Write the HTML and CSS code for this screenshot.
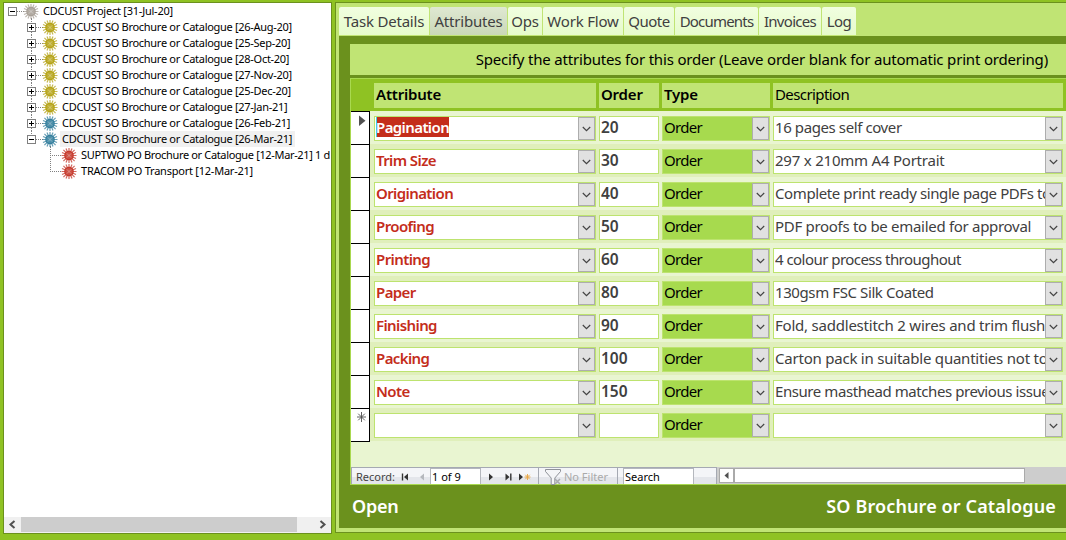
FILE: index.html
```html
<!DOCTYPE html>
<html lang="en">
<head>
<meta charset="utf-8">
<title>CDCUST Project</title>
<link rel="stylesheet" href="styles.css">
</head>
<body>
<svg class="defs" width="0" height="0">
  <defs>
    <g id="sun">
      <path d="M0-7.5V7.5M-7.5 0H7.5M-5.6-5.6L5.6 5.6M-5.6 5.6L5.6-5.6M-3-7L3 7M3-7L-3 7M-7-3L7 3M-7 3L7-3" stroke="currentColor" stroke-width="1.2" opacity=".75"/>
      <circle r="4.8" fill="currentColor"/>
      <circle class="core" r="3.6"/>
      <path class="glow" d="M-2-2L2 2M-2 2L2-2" stroke-width=".9"/>
    </g>
    <g id="minus"><rect x="-4" y="-4" width="8" height="8" fill="#fff" stroke="#808080"/><path d="M-2 0H3" transform="translate(-.5 0)" stroke="#000"/></g>
    <g id="plus"><use href="#minus"/><path d="M0-2.5V2.5" stroke="#000"/></g>
    <symbol id="root" viewBox="0 0 39 16"><path class="dots" d="M13 8.5H20M27.5 15V16"/><use href="#minus" x="8.5" y="8.5"/><use href="#sun" x="27" y="8.5"/></symbol>
    <symbol id="branch" viewBox="0 0 58 16"><path class="dots" d="M27.5 0V4M27.5 13V16M32 8.5H39"/><use href="#plus" x="27.5" y="8.5"/><use href="#sun" x="46" y="8.5"/></symbol>
    <symbol id="branch-open" viewBox="0 0 58 16"><path class="dots" d="M27.5 0V4M32 8.5H39M46.5 15V16"/><use href="#minus" x="27.5" y="8.5"/><use href="#sun" x="46" y="8.5"/></symbol>
    <symbol id="leaf" viewBox="0 0 77 16"><path class="dots" d="M46.5 0V16M48 8.5H58"/><use href="#sun" x="65" y="8.5"/></symbol>
    <symbol id="leaf-last" viewBox="0 0 77 16"><path class="dots" d="M46.5 0V8M46 8.5H58"/><use href="#sun" x="65" y="8.5"/></symbol>
    <symbol id="chev" viewBox="0 0 15 21"><path d="M3.8 9L7.5 12.6L11.2 9" fill="none" stroke="#444" stroke-width="1.2"/></symbol>
  </defs>
</svg>

<div class="app">
  <section class="tree-panel">
    <div class="tree">
      <div class="node grey"><svg width="39" height="16"><use href="#root"/></svg><span class="wide">CDCUST Project [31-Jul-20]</span></div>
      <div class="node yellow"><svg width="58" height="16"><use href="#branch"/></svg><span>CDCUST SO Brochure or Catalogue [26-Aug-20]</span></div>
      <div class="node yellow"><svg width="58" height="16"><use href="#branch"/></svg><span>CDCUST SO Brochure or Catalogue [25-Sep-20]</span></div>
      <div class="node yellow"><svg width="58" height="16"><use href="#branch"/></svg><span>CDCUST SO Brochure or Catalogue [28-Oct-20]</span></div>
      <div class="node yellow"><svg width="58" height="16"><use href="#branch"/></svg><span>CDCUST SO Brochure or Catalogue [27-Nov-20]</span></div>
      <div class="node yellow"><svg width="58" height="16"><use href="#branch"/></svg><span>CDCUST SO Brochure or Catalogue [25-Dec-20]</span></div>
      <div class="node yellow"><svg width="58" height="16"><use href="#branch"/></svg><span>CDCUST SO Brochure or Catalogue [27-Jan-21]</span></div>
      <div class="node blue"><svg width="58" height="16"><use href="#branch"/></svg><span>CDCUST SO Brochure or Catalogue [26-Feb-21]</span></div>
      <div class="node blue selected"><svg width="58" height="16"><use href="#branch-open"/></svg><span>CDCUST SO Brochure or Catalogue [26-Mar-21]</span></div>
      <div class="node red"><svg width="77" height="16"><use href="#leaf"/></svg><span class="long">SUPTWO PO Brochure or Catalogue [12-Mar-21] 1 d</span></div>
      <div class="node red"><svg width="77" height="16"><use href="#leaf-last"/></svg><span class="wide">TRACOM PO Transport [12-Mar-21]</span></div>
    </div>
    <div class="hscroll">
      <svg width="17" height="15"><path d="M10.5 4L6.5 7.5L10.5 11" fill="none" stroke="#505050" stroke-width="2"/></svg>
      <div class="thumb"></div>
      <svg width="17" height="15"><path d="M6.5 4L10.5 7.5L6.5 11" fill="none" stroke="#505050" stroke-width="2"/></svg>
    </div>
  </section>

  <section class="detail">
    <nav class="tabs">
      <div class="tab t1">Task Details</div>
      <div class="tab t2 active">Attributes</div>
      <div class="tab t3">Ops</div>
      <div class="tab t4">Work Flow</div>
      <div class="tab t5">Quote</div>
      <div class="tab t6">Documents</div>
      <div class="tab t7">Invoices</div>
      <div class="tab t8">Log</div>
    </nav>
    <div class="page">
      <div class="banner"><span>Specify the attributes for this order (Leave order blank for automatic print ordering)</span></div>
      <div class="sheet">
        <div class="head">
          <div></div><div class="h b">Attribute</div><div class="h b">Order</div><div class="h b">Type</div><div class="h">Description</div>
        </div>
        <div class="rows">
          <div class="row"><div class="sel"><svg width="18" height="32"><path d="M8 3.5V14L14.5 8.7Z" fill="#505050"/></svg></div><div class="f attr"><span><mark>Pagination</mark></span><i><svg width="15" height="21"><use href="#chev"/></svg></i></div><div class="f num">20</div><div class="f type"><span>Order</span><i><svg width="15" height="21"><use href="#chev"/></svg></i></div><div class="f desc"><span>16 pages self cover</span><i><svg width="15" height="21"><use href="#chev"/></svg></i></div></div>
          <div class="row"><div class="sel"></div><div class="f attr"><span>Trim Size</span><i><svg width="15" height="21"><use href="#chev"/></svg></i></div><div class="f num">30</div><div class="f type"><span>Order</span><i><svg width="15" height="21"><use href="#chev"/></svg></i></div><div class="f desc looser"><span>297 x 210mm A4 Portrait</span><i><svg width="15" height="21"><use href="#chev"/></svg></i></div></div>
          <div class="row"><div class="sel"></div><div class="f attr"><span>Origination</span><i><svg width="15" height="21"><use href="#chev"/></svg></i></div><div class="f num">40</div><div class="f type"><span>Order</span><i><svg width="15" height="21"><use href="#chev"/></svg></i></div><div class="f desc"><span>Complete print ready single page PDFs to</span><i><svg width="15" height="21"><use href="#chev"/></svg></i></div></div>
          <div class="row"><div class="sel"></div><div class="f attr"><span>Proofing</span><i><svg width="15" height="21"><use href="#chev"/></svg></i></div><div class="f num">50</div><div class="f type"><span>Order</span><i><svg width="15" height="21"><use href="#chev"/></svg></i></div><div class="f desc loose"><span>PDF proofs to be emailed for approval</span><i><svg width="15" height="21"><use href="#chev"/></svg></i></div></div>
          <div class="row"><div class="sel"></div><div class="f attr"><span>Printing</span><i><svg width="15" height="21"><use href="#chev"/></svg></i></div><div class="f num">60</div><div class="f type"><span>Order</span><i><svg width="15" height="21"><use href="#chev"/></svg></i></div><div class="f desc tight"><span>4 colour process throughout</span><i><svg width="15" height="21"><use href="#chev"/></svg></i></div></div>
          <div class="row"><div class="sel"></div><div class="f attr"><span>Paper</span><i><svg width="15" height="21"><use href="#chev"/></svg></i></div><div class="f num">80</div><div class="f type"><span>Order</span><i><svg width="15" height="21"><use href="#chev"/></svg></i></div><div class="f desc"><span>130gsm FSC Silk Coated</span><i><svg width="15" height="21"><use href="#chev"/></svg></i></div></div>
          <div class="row"><div class="sel"></div><div class="f attr"><span>Finishing</span><i><svg width="15" height="21"><use href="#chev"/></svg></i></div><div class="f num">90</div><div class="f type"><span>Order</span><i><svg width="15" height="21"><use href="#chev"/></svg></i></div><div class="f desc looser"><span>Fold, saddlestitch 2 wires and trim flush</span><i><svg width="15" height="21"><use href="#chev"/></svg></i></div></div>
          <div class="row"><div class="sel"></div><div class="f attr"><span>Packing</span><i><svg width="15" height="21"><use href="#chev"/></svg></i></div><div class="f num">100</div><div class="f type"><span>Order</span><i><svg width="15" height="21"><use href="#chev"/></svg></i></div><div class="f desc looser"><span>Carton pack in suitable quantities not to</span><i><svg width="15" height="21"><use href="#chev"/></svg></i></div></div>
          <div class="row"><div class="sel"></div><div class="f attr"><span>Note</span><i><svg width="15" height="21"><use href="#chev"/></svg></i></div><div class="f num">150</div><div class="f type"><span>Order</span><i><svg width="15" height="21"><use href="#chev"/></svg></i></div><div class="f desc snug"><span>Ensure masthead matches previous issue</span><i><svg width="15" height="21"><use href="#chev"/></svg></i></div></div>
          <div class="row last"><div class="sel"><svg width="18" height="32"><path d="M10.5 3V13M6 8H15M7.2 4.7L13.8 11.3M13.8 4.7L7.2 11.3" stroke="#505050" stroke-width=".9"/></svg></div><div class="f attr"><span></span><i><svg width="15" height="21"><use href="#chev"/></svg></i></div><div class="f num"></div><div class="f type"><span>Order</span><i><svg width="15" height="21"><use href="#chev"/></svg></i></div><div class="f desc"><span></span><i><svg width="15" height="21"><use href="#chev"/></svg></i></div></div>
        </div>
        <div class="navbar">
          <div class="recnav">
            <span class="rec">Record:</span>
            <svg width="36" height="17"><path d="M8.5 5.5V12.5" stroke="#333" stroke-width="1.4"/><path d="M14 5.5V12.5L10 9Z" fill="#333"/><path d="M30 5.5V12.5L26 9Z" fill="#b5b8bd"/></svg>
            <span class="box pos">1 of 9</span>
            <svg width="57" height="17"><path d="M8 5.5V12.5L12 9ZM24.5 5.5V12.5L28.5 9ZM38 5.5V12.5L42 9Z" fill="#333"/><path d="M29.8 5.5V12.5" stroke="#333" stroke-width="1.4"/><path d="M46.5 6V12M43.5 9H49.5M44.3 6.8L48.7 11.2M48.7 6.8L44.3 11.2" stroke="#e9a540" stroke-width=".9"/></svg>
            <span class="filter"><svg width="17" height="17"><path d="M.5 1.5H15.5V3.5L9.8 10V16.5H6.2V10L.5 3.5Z" fill="#f4f5f7" stroke="#8f9298"/><path d="M10 11L15 16M15 11L10 16" stroke="#a9abb0" stroke-width="1.5"/></svg><span>No Filter</span></span>
            <span class="box search">Search</span>
          </div>
          <div class="sheet-scroll"><div class="arrow"><svg width="13" height="13"><path d="M8.5 3V10L4.5 6.5Z" fill="#505050"/></svg></div><div class="bar"></div></div>
        </div>
      </div>
      <div class="foot"><span class="open">Open</span><span class="title">SO Brochure or Catalogue</span></div>
    </div>
  </section>
</div>
</body>
</html>
```
FILE: styles.css
```css
* { box-sizing: border-box; }
body {
  margin: 0;
  width: 1066px;
  height: 540px;
  overflow: hidden;
  background: #8fc223;
  font-family: "Noto Sans", "Open Sans", sans-serif;
  font-size: 15px;
  color: #404040;
}
svg { display: block; flex: none; }
.defs { position: absolute; }
.app { display: flex; gap: 3px; padding: 2px 0 0 3px; height: 540px; }

.tree-panel {
  flex: none;
  width: 329px;
  height: 532px;
  border: 1px solid #6b911d;
  background: #fff;
  display: flex;
  flex-direction: column;
}
.tree { flex: 1; overflow: hidden; font-size: 11px; }
.node { display: flex; height: 16px; }
.node span { line-height: 16px; white-space: nowrap; letter-spacing: -0.29px; color: #000; }
.node .wide { letter-spacing: -0.23px; }
.node .long { letter-spacing: -0.35px; }
.selected span { background: #f0f0f0; padding: 0 3px 0 2px; margin-left: -2px; }
.dots { stroke: #808080; stroke-dasharray: 1 1; }
.glow { stroke: #fff; opacity: .4; }
.core { fill: #fff; opacity: .12; }
.grey { color: #a8a097; }
.grey .core { opacity: .3; }
.yellow { color: #b5a316; }
.yellow .core { fill: #ffee20; opacity: .6; }
.blue { color: #347f9e; }
.red { color: #c5382b; }
.hscroll { display: flex; height: 16px; background: #f0f0f0; justify-content: space-between; }
.thumb { width: 276px; height: 15px; background: #cdcdcd; margin-right: auto; }

.detail {
  flex: none;
  width: 731px;
  height: 531px;
  border: 1px solid #6b911d;
  border-right: 0;
  background: #c0e474;
  padding: 4px 0 4px 3px;
  display: flex;
  flex-direction: column;
}
.tabs { display: flex; gap: 1px; height: 29px; }
.tab {
  height: 28px;
  line-height: 29px;
  text-align: center;
  white-space: nowrap;
  letter-spacing: -0.2px;
  border-radius: 2px 2px 0 0;
  background: linear-gradient(#f1fee0, #e6fbcb);
}
.active { background: linear-gradient(#dfe8d2, #cad8b8); }
.t1 { width: 90px; }
.t2 { width: 77px; }
.t3 { width: 34px; }
.t4 { width: 80px; }
.t5 { width: 50px; letter-spacing: -0.5px; }
.t6 { width: 83px; letter-spacing: -0.8px; }
.t7 { width: 62px; letter-spacing: -0.7px; }
.t8 { width: 34px; letter-spacing: -0.5px; }

.page {
  flex: 1;
  background: #6b911d;
  padding: 8px 0 0 11px;
  display: flex;
  flex-direction: column;
}
.banner {
  height: 31px;
  line-height: 31px;
  background: #c0e474;
  color: #000;
  text-align: right;
  padding-right: 18px;
  white-space: nowrap;
  letter-spacing: -0.18px;
}
.sheet {
  margin-top: 3px;
  height: 407px;
  border: 1px solid #a9d94f;
  border-right: 0;
  background: #e9f5d1;
  display: flex;
  flex-direction: column;
}
.head, .row { display: grid; grid-template-columns: 20px 222px 60px 108px 290px; column-gap: 3px; }
.head { height: 32px; background: #8fc223; padding-top: 4px; }
.h { height: 25px; line-height: 23px; padding-left: 2px; background: #c0e474; color: #000; letter-spacing: -0.6px; }
.h.b { font-weight: 600; letter-spacing: -0.2px; }
.rows { flex: 1; }
.row { height: 33px; }
.row:nth-child(even) { background: #e0efbb; }
.sel { width: 19px; height: 33px; background: #fff; border-top: 1px solid #000; border-right: 1px solid #000; }
.last .sel { height: 34px; border-bottom: 1px solid #000; }
.f {
  margin-top: 5px;
  height: 25px;
  border: 1px solid #bde36f;
  background: #fff;
  display: flex;
  line-height: 21px;
  padding-left: 1px;
  white-space: nowrap;
}
.f span { flex: 1; min-width: 0; overflow: hidden; }
.f i { flex: none; width: 17px; height: 23px; background: #e1e1e1; border: 1px solid #adadad; }
.attr { color: #c42d1b; font-weight: 600; letter-spacing: -0.6px; }
.attr mark { display: inline-block; height: 20px; line-height: 21px; vertical-align: top; color: #fff; background: #c42d1b; box-shadow: inset 1px 0 #3bd2e4; }
.num { font-weight: 600; font-size: 15.5px; }
.type { background: #a7da4e; color: #000; letter-spacing: -0.7px; }
.desc { letter-spacing: -0.4px; }
.tight { letter-spacing: -0.54px; }
.snug { letter-spacing: -0.43px; }
.loose { letter-spacing: -0.3px; }
.looser { letter-spacing: -0.22px; }

.navbar { display: flex; height: 17px; font-size: 11px; }
.recnav { width: 366px; height: 17px; display: flex; background: linear-gradient(#f4f5f8 55%, #e4e6eb 56%); border: solid #a5a9b2; border-width: 1px 1px 0; color: #444; line-height: 17px; }
.rec { width: 42px; padding-left: 4px; }
.box { height: 16px; line-height: 16px; border: 1px solid #b4b7bd; border-bottom: 0; background: #fff; color: #000; padding-left: 1px; }
.pos { width: 51px; }
.filter { display: flex; width: 80px; gap: 2px; padding-left: 6px; border: solid #a5a9b2; border-width: 0 1px; color: #aaa; margin-right: 5px; }
.search { width: 71px; }
.sheet-scroll { flex: 1; display: flex; background: #cdcdcd; padding: 1px 0 1px 2px; }
.arrow { width: 15px; height: 15px; background: #fff; border: 1px solid #aaa; }
.bar { width: 291px; height: 15px; background: #fff; border: 1px solid #aaa; }

.foot { flex: 1; display: flex; justify-content: space-between; padding: 0 10px 0 2px; line-height: 43px; font-size: 18px; font-weight: 600; color: #fff; }
.open { letter-spacing: -0.25px; }
.title { letter-spacing: 0.12px; }
```
